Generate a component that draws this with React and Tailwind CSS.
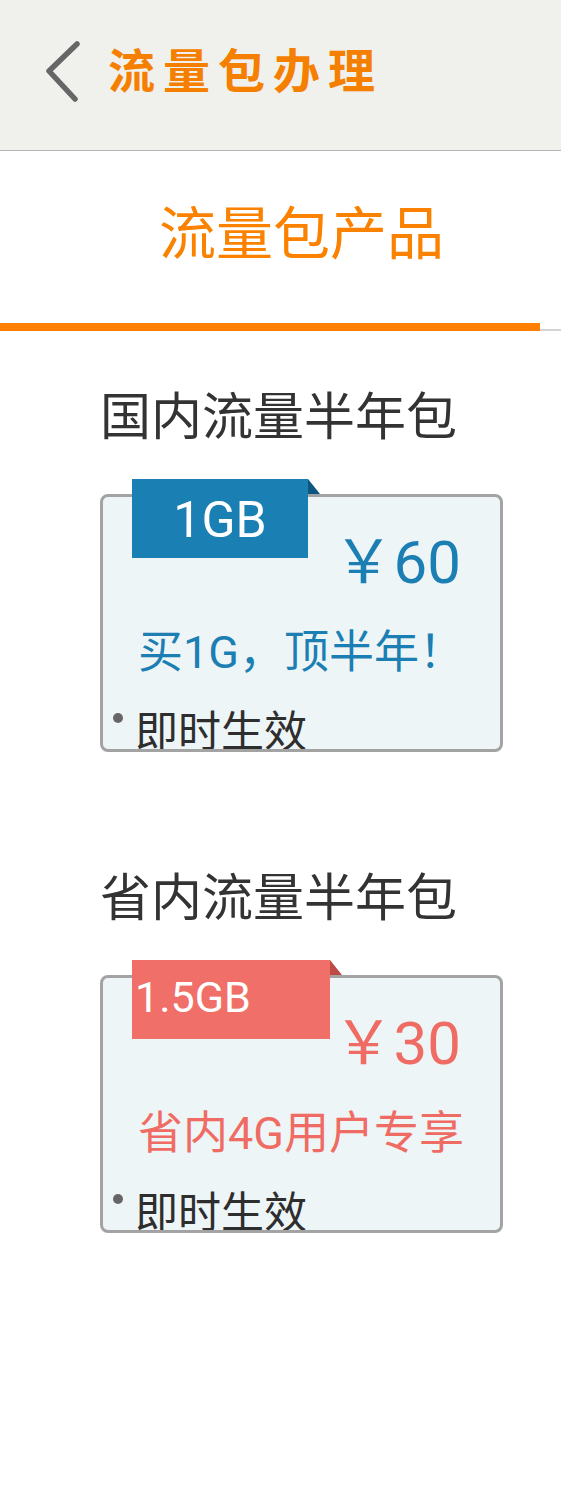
import React from "react";

const cjk = { fontFamily: '"Noto Sans CJK SC", sans-serif' };
const mixed = { fontFamily: 'Roboto, "Noto Sans CJK SC", sans-serif' };

function Product({ title, ribbon, ribbonW, ribbonBg, foldBg, ribbonTextCls, price, color, slogan, mt }) {
  return (
    <section className={mt}>
      <h2 className="pl-[100px] text-[51px] leading-none text-[#333333]" style={cjk}>
        {title}
      </h2>
      <div className="relative mt-[55px] ml-[100px] w-[403px] h-[258px] rounded-[8px] border-[3px] border-[#a3a3a3] bg-[#eef5f7]">
        <div className={`absolute left-[29px] top-[-18px] h-[79px] ${ribbonW} ${ribbonBg}`}>
          <div className={`leading-none text-white ${ribbonTextCls}`} style={mixed}>
            {ribbon}
          </div>
          <div
            className={`absolute left-full top-0 w-[12px] h-[15px] ${foldBg} [clip-path:polygon(0_0,100%_100%,0_100%)]`}
          />
        </div>
        <div className="flex h-full flex-col overflow-hidden rounded-[5px]">
          <div className={`pt-[36px] pr-[39px] text-right text-[60px] leading-none ${color}`} style={mixed}>
            ￥{price}
          </div>
          <div className={`mt-[37px] pl-[35px] text-[45px] leading-none ${color}`} style={mixed}>
            {slogan}
          </div>
          <div className="mt-[32px] flex items-start pl-[10px]">
            <span className="mt-[6px] h-[10px] w-[10px] shrink-0 rounded-full bg-[#666666]" />
            <span className="ml-[12px] text-[43px] leading-none text-[#2e2e2e]" style={cjk}>
              即时生效
            </span>
          </div>
        </div>
      </div>
    </section>
  );
}

export default function App() {
  return (
    <div className="min-h-[1486px] w-[561px] bg-white">
      <header className="flex h-[151px] items-center border-b border-[#b5b5b5] bg-[#f0f0ec] pl-[43px]">
        <svg width="40" height="62" viewBox="0 0 40 62" className="mt-[-6px] shrink-0">
          <polyline
            points="34,3 6,30 32,58"
            fill="none"
            stroke="#666666"
            strokeWidth="5.5"
            strokeLinecap="round"
            strokeLinejoin="round"
          />
        </svg>
        <h1
          className="ml-[25px] mt-[-16px] text-[47px] font-bold leading-none tracking-[8px] text-[#f57f00]"
          style={cjk}
        >
          流量包办理
        </h1>
      </header>

      <div className="pt-[50px]">
        <div className="pl-[159px] text-[57px] leading-none text-[#fb8200]" style={cjk}>
          流量包产品
        </div>
        <div className="mt-[65px] flex items-end">
          <div className="h-[8px] w-[540px] bg-[#ff8000]" />
          <div className="h-[2px] flex-1 bg-[#d4d4d4]" />
        </div>
      </div>

      <Product
        mt="mt-[57px]"
        title="国内流量半年包"
        ribbon="1GB"
        ribbonW="w-[176px]"
        ribbonBg="bg-[#1a80b4]"
        foldBg="bg-[#0d5680]"
        ribbonTextCls="pt-[16px] text-center text-[50px]"
        price="60"
        color="text-[#1b7fb3]"
        slogan="买1G，顶半年！"
      />

      <Product
        mt="mt-[117px]"
        title="省内流量半年包"
        ribbon="1.5GB"
        ribbonW="w-[198px]"
        ribbonBg="bg-[#f06f68]"
        foldBg="bg-[#c04b45]"
        ribbonTextCls="pt-[16px] pl-[3px] text-left text-[43px]"
        price="30"
        color="text-[#ef6c64]"
        slogan="省内4G用户专享"
      />
    </div>
  );
}
